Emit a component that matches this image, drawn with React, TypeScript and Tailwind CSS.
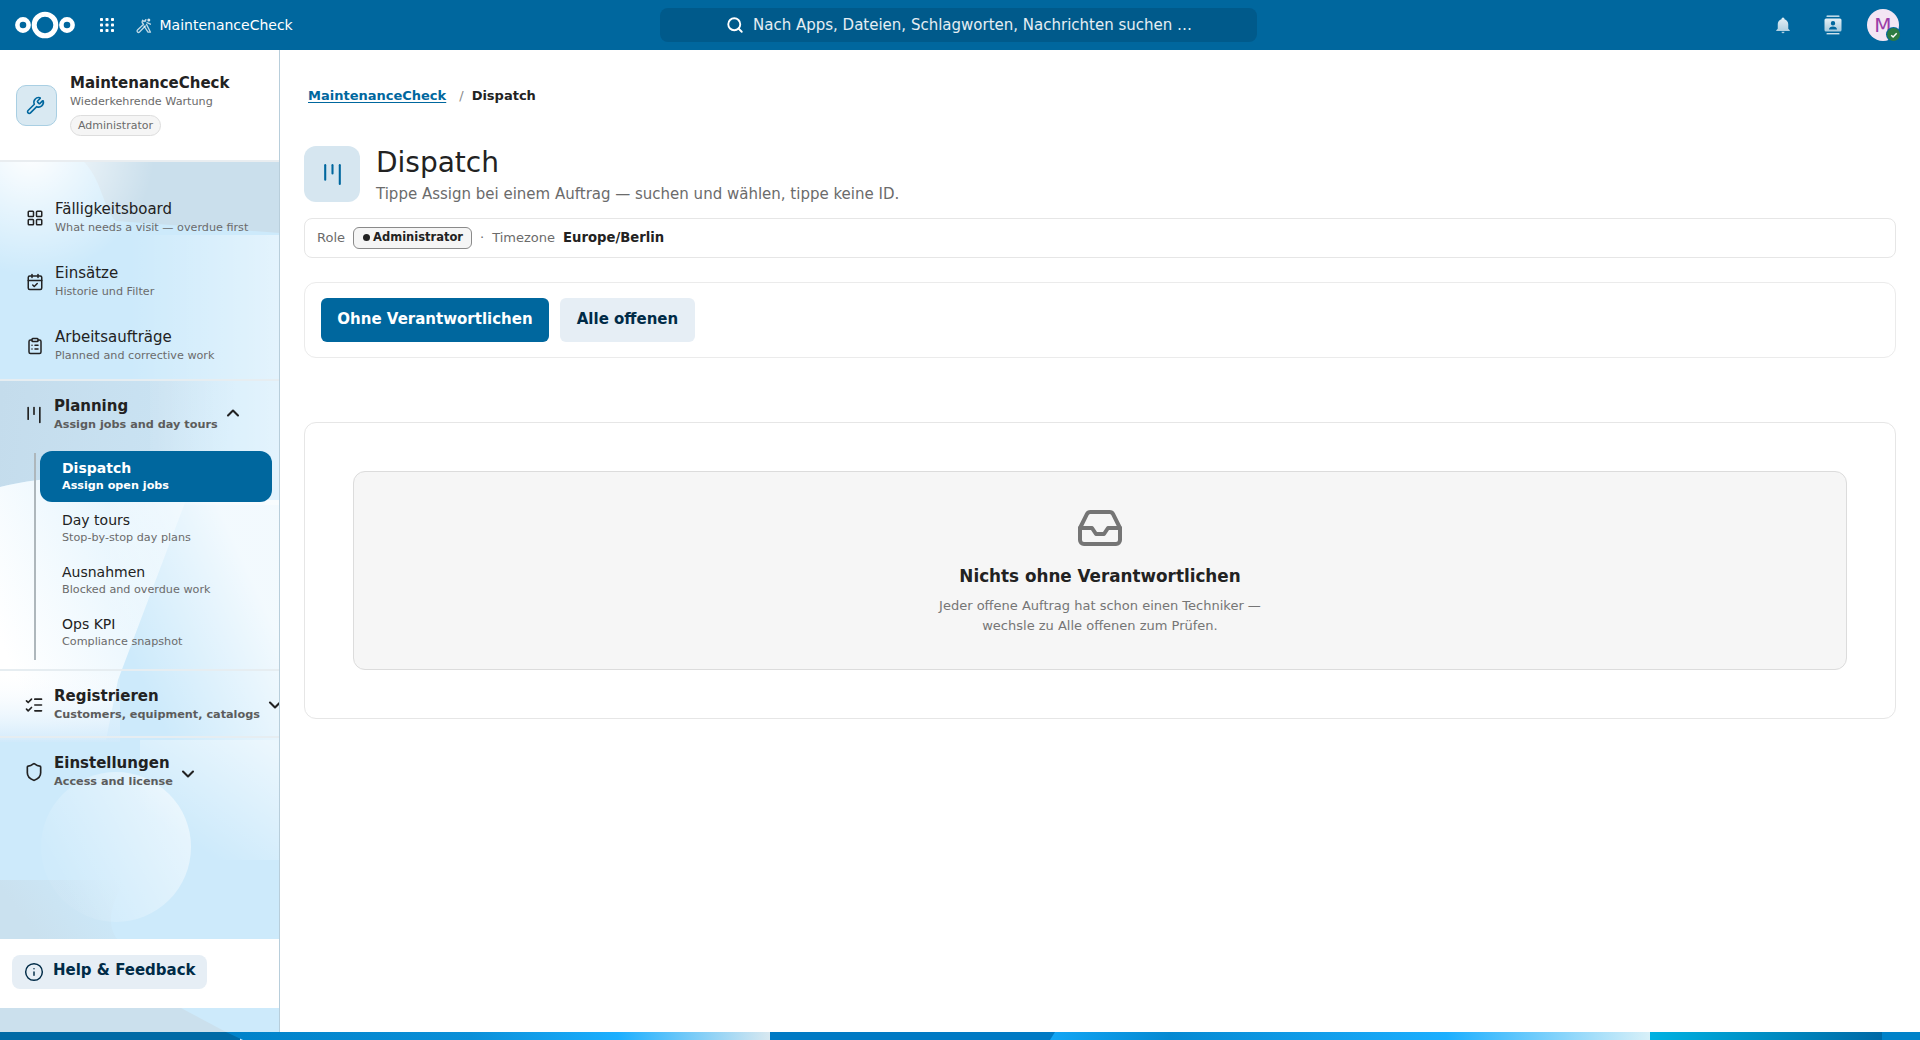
import {
  CalendarCheck,
  ChevronDown,
  ChevronUp,
  ClipboardList,
  Inbox,
  Info,
  Kanban,
  LayoutGrid,
  ListChecks,
  Search,
  Shield,
  Wrench,
} from "lucide-react"

const topItems = [
  { title: "Fälligkeitsboard", sub: "What needs a visit — overdue first", Icon: LayoutGrid },
  { title: "Einsätze", sub: "Historie und Filter", Icon: CalendarCheck },
  { title: "Arbeitsaufträge", sub: "Planned and corrective work", Icon: ClipboardList },
]

const planningItems = [
  { title: "Day tours", sub: "Stop-by-stop day plans" },
  { title: "Ausnahmen", sub: "Blocked and overdue work" },
  { title: "Ops KPI", sub: "Compliance snapshot" },
]

// Nextcloud wallpaper, only visible behind the sidebar and in the strip at the bottom
function Wallpaper() {
  return (
    <svg className="absolute inset-0" width="1920" height="1040" viewBox="0 0 1920 1040">
      <defs>
        <radialGradient id="glowTop" gradientUnits="userSpaceOnUse" cx="30" cy="150" r="125">
          <stop offset="0" stopColor="#ffffff" />
          <stop offset="1" stopColor="#ffffff" stopOpacity="0" />
        </radialGradient>
        <linearGradient id="rightFade" gradientUnits="userSpaceOnUse" x1="130" y1="0" x2="280" y2="0">
          <stop offset="0" stopColor="#ffffff" stopOpacity="0" />
          <stop offset="1" stopColor="#ffffff" stopOpacity="0.45" />
        </linearGradient>
        <linearGradient id="planDark" gradientUnits="userSpaceOnUse" x1="0" y1="400" x2="230" y2="430">
          <stop offset="0" stopColor="#c4dcec" />
          <stop offset="0.7" stopColor="#c9e2f2" />
          <stop offset="1" stopColor="#c9e2f2" stopOpacity="0" />
        </linearGradient>
        <linearGradient id="whiteWedge" gradientUnits="userSpaceOnUse" x1="0" y1="640" x2="190" y2="560">
          <stop offset="0" stopColor="#ffffff" />
          <stop offset="1" stopColor="#dff2fd" />
        </linearGradient>
        <linearGradient id="lowFade" gradientUnits="userSpaceOnUse" x1="0" y1="670" x2="0" y2="745">
          <stop offset="0" stopColor="#ffffff" stopOpacity="0" />
          <stop offset="1" stopColor="#cfe9fb" />
        </linearGradient>
        <linearGradient id="rightWhite" gradientUnits="userSpaceOnUse" x1="150" y1="700" x2="280" y2="640">
          <stop offset="0" stopColor="#ffffff" stopOpacity="0" />
          <stop offset="1" stopColor="#ffffff" stopOpacity="0.75" />
        </linearGradient>
        <linearGradient id="lowRight" gradientUnits="userSpaceOnUse" x1="200" y1="850" x2="270" y2="745">
          <stop offset="0" stopColor="#ffffff" stopOpacity="0" />
          <stop offset="1" stopColor="#ffffff" stopOpacity="0.6" />
        </linearGradient>
        <linearGradient id="bottomDark" gradientUnits="userSpaceOnUse" x1="120" y1="880" x2="40" y2="940">
          <stop offset="0" stopColor="#cae1ef" stopOpacity="0" />
          <stop offset="1" stopColor="#cae1ef" />
        </linearGradient>
        <linearGradient id="disc" gradientUnits="userSpaceOnUse" x1="60" y1="880" x2="190" y2="810">
          <stop offset="0" stopColor="#ffffff" stopOpacity="0.05" />
          <stop offset="1" stopColor="#ffffff" stopOpacity="0.55" />
        </linearGradient>
        <linearGradient id="strip1" gradientUnits="userSpaceOnUse" x1="226" y1="0" x2="770" y2="0">
          <stop offset="0" stopColor="#0082c9" />
          <stop offset="0.45" stopColor="#0a8fd8" />
          <stop offset="0.72" stopColor="#1cafff" />
          <stop offset="1" stopColor="#d8e8f0" />
        </linearGradient>
        <linearGradient id="strip2" gradientUnits="userSpaceOnUse" x1="1050" y1="0" x2="1650" y2="0">
          <stop offset="0" stopColor="#12a6f5" />
          <stop offset="0.2" stopColor="#0589d2" />
          <stop offset="0.66" stopColor="#1cafff" />
          <stop offset="1" stopColor="#d8f0f8" />
        </linearGradient>
        <linearGradient id="strip3" gradientUnits="userSpaceOnUse" x1="1650" y1="0" x2="1885" y2="0">
          <stop offset="0" stopColor="#00b2e2" />
          <stop offset="1" stopColor="#0068a5" />
        </linearGradient>
      </defs>

      <rect x="0" y="50" width="280" height="990" fill="#cdeafb" />
      <path d="M82 160 C102 178 104 212 116 221 L280 233 L280 160 Z" fill="#cadfec" />
      <rect x="0" y="150" width="160" height="130" fill="url(#glowTop)" />
      <rect x="130" y="235" width="150" height="145" fill="url(#rightFade)" />
      <path d="M0 380 L280 380 L280 502 L185 502 C120 470 50 475 0 487 Z" fill="url(#planDark)" />
      <rect x="150" y="380" width="130" height="125" fill="url(#rightFade)" />
      <path d="M0 487 C50 475 120 470 186 500 L118 680 L106 740 L0 740 Z" fill="url(#whiteWedge)" />
      <rect x="0" y="670" width="120" height="72" fill="url(#lowFade)" />
      <rect x="110" y="500" width="170" height="240" fill="url(#rightWhite)" />
      <rect x="140" y="740" width="140" height="120" fill="url(#lowRight)" />
      <path d="M0 880 L125 880 C110 905 106 925 118 940 L0 940 Z" fill="url(#bottomDark)" />
      <circle cx="116" cy="847" r="75" fill="url(#disc)" />
      <path d="M0 1008 L181 1008 L226 1032 L0 1032 Z" fill="#cbe0ed" />

      <rect x="0" y="1032" width="240" height="8" fill="#006aa6" />
      <path d="M226 1032 L770 1032 L770 1040 L243 1040 Z" fill="url(#strip1)" />
      <rect x="770" y="1032" width="285" height="8" fill="#007ac4" />
      <path d="M1055 1032 L1650 1032 L1650 1040 L1050 1040 Z" fill="url(#strip2)" />
      <rect x="1650" y="1032" width="235" height="8" fill="url(#strip3)" />
      <rect x="1882" y="1032" width="38" height="8" fill="#0082c9" />
    </svg>
  )
}

function Logo() {
  return (
    <svg width="62" height="28" viewBox="0 0 62 28" fill="none" stroke="#ffffff">
      <circle cx="31" cy="14" r="10.8" strokeWidth="5" />
      <circle cx="9" cy="14" r="5.6" strokeWidth="4.6" />
      <circle cx="53" cy="14" r="5.6" strokeWidth="4.6" />
    </svg>
  )
}

function AppsIcon() {
  const dots = [0, 5.5, 11]
  return (
    <svg width="14" height="14" viewBox="0 0 14 14" fill="#ffffff">
      {dots.map((y) => dots.map((x) => <rect key={`${x}-${y}`} x={x} y={y} width="3" height="3" rx="0.8" />))}
    </svg>
  )
}

function BellIcon() {
  return (
    <svg width="18" height="18" viewBox="0 0 24 24">
      <defs>
        <linearGradient id="iconFade" x1="0" y1="0" x2="0" y2="1">
          <stop offset="0" stopColor="#ffffff" stopOpacity="0.9" />
          <stop offset="1" stopColor="#ffffff" stopOpacity="0.65" />
        </linearGradient>
      </defs>
      <path
        d="M21 19v1H3v-1l2-2v-6c0-3.1 2-5.8 5-6.7V4a2 2 0 0 1 4 0v.3c3 .9 5 3.6 5 6.7v6l2 2zm-7 2a2 2 0 0 1-4 0h4z"
        fill="url(#iconFade)"
      />
    </svg>
  )
}

function ContactsIcon() {
  return (
    <svg width="18" height="20" viewBox="0 0 18 20" fill="url(#iconFade)">
      <rect x="2.5" y="0.5" width="13" height="1.6" rx="0.6" />
      <rect x="2.5" y="17.9" width="13" height="1.6" rx="0.6" />
      <path
        fillRule="evenodd"
        d="M2 3.5h14a1.5 1.5 0 0 1 1.5 1.5v10a1.5 1.5 0 0 1-1.5 1.5H2A1.5 1.5 0 0 1 .5 15V5A1.5 1.5 0 0 1 2 3.5zM9 6a2.2 2.2 0 1 0 0 4.4A2.2 2.2 0 0 0 9 6zm-4 8.5h8c0-2-1.8-3-4-3s-4 1-4 3z"
      />
    </svg>
  )
}

function HeaderToolIcon() {
  return (
    <svg width="16" height="17" viewBox="0 0 16 17" fill="none" stroke="#ffffff" strokeOpacity="0.75" strokeWidth="1.3" strokeLinecap="round" strokeLinejoin="round">
      <path d="M9.5 4.2a3.2 3.2 0 0 1 .4-1.6L8 4.5 6.6 3.2a3 3 0 0 0 1 4L1.5 13a1.4 1.4 0 0 0 2 2l5.8-6" />
      <path d="M8 9l4 6.2h2.5L10.5 7.4" />
      <circle cx="12.8" cy="3" r="1.5" fill="#ffffff" fillOpacity="0.85" stroke="none" />
      <path d="M11 5.6l3.4 1.6" />
    </svg>
  )
}

function Header() {
  return (
    <header className="relative flex h-[50px] items-center bg-[#00679e] text-white">
      <div className="ml-[14px]">
        <Logo />
      </div>
      <div className="ml-[24px]">
        <AppsIcon />
      </div>
      <div className="ml-[22px]">
        <HeaderToolIcon />
      </div>
      <span className="ml-[7.5px] text-[14px]">MaintenanceCheck</span>
      <div className="absolute left-[660px] top-[8px] flex h-[34px] w-[597px] items-center rounded-lg bg-[#005a8b] pl-[66px]">
        <Search size={18} strokeWidth={2.5} className="text-white" />
        <span className="ml-[9px] text-[15px] text-white/90">Nach Apps, Dateien, Schlagworten, Nachrichten suchen …</span>
      </div>
      <div className="ml-auto flex items-center">
        <BellIcon />
        <div className="ml-[32px] flex">
          <ContactsIcon />
        </div>
        <div className="relative ml-[25px] mr-[21px] flex h-8 w-8 items-center justify-center rounded-full bg-[#f3e6f4] text-[20px] text-[#9b3ea8]">
          M
          <span className="absolute left-[20px] top-[19px] flex h-[13px] w-[13px] items-center justify-center rounded-full bg-[#2d7b41] ring-1 ring-[#00679e]">
            <svg width="8" height="8" viewBox="0 0 8 8" fill="none" stroke="#ffffff" strokeWidth="1.5">
              <path d="M1.2 4.2l1.9 1.8 3.6-3.8" />
            </svg>
          </span>
        </div>
      </div>
    </header>
  )
}

function Sidebar() {
  return (
    <aside className="mb-2 flex w-[280px] shrink-0 flex-col overflow-hidden border-r border-[#b8cedb] pb-6">
      <div className="flex h-[112px] shrink-0 items-start gap-[13px] border-b-2 border-[#e9edf0] bg-white pl-4 pt-[21px]">
        <div className="mt-[14px] flex h-[41px] w-[41px] items-center justify-center rounded-[10px] border border-[#a9cfe3] bg-[#d9e9f2] text-[#00679e]">
          <Wrench size={19} strokeWidth={2} className="-translate-x-px" />
        </div>
        <div>
          <div className="text-[15px] font-bold leading-6 text-[#222222]">MaintenanceCheck</div>
          <div className="text-[11.2px] leading-[14px] text-[#6b6b6b]">Wiederkehrende Wartung</div>
          <div className="mt-[6px] inline-block rounded-full border border-[#dddddd] bg-[#f5f5f5] px-[7px] text-[11px] leading-[19px] text-[#6b6b6b]">
            Administrator
          </div>
        </div>
      </div>

      <nav className="flex-1 pt-6 text-[#222222]">
        {topItems.map(({ title, sub, Icon }) => (
          <div key={title} className="flex h-16 items-center pl-[26px]">
            <Icon size={18} strokeWidth={2} />
            <div className="ml-[11px]">
              <div className="text-[15px] leading-5">{title}</div>
              <div className="text-[11.2px] leading-[18px] text-[#6b6b6b]">{sub}</div>
            </div>
          </div>
        ))}

        <div className="mt-px flex h-[69px] items-center border-t-2 border-[#e6edf1] pl-[24px]">
          <Kanban size={20} strokeWidth={2} />
          <div className="ml-[10px]">
            <div className="text-[15px] font-bold leading-5">Planning</div>
            <div className="text-[11.25px] font-bold leading-[18px] text-[#5c5c5c]">Assign jobs and day tours</div>
          </div>
          <ChevronUp size={20} strokeWidth={2.5} className="ml-[5px] -translate-y-[2px]" />
        </div>

        <div className="ml-[34px] mt-[5px] w-[238px] border-l-2 border-[#aeb7bc]">
          <div className="-mb-[1.5px] ml-[4px] flex h-[51px] -translate-y-[2px] flex-col justify-center rounded-xl bg-[#00679e] pl-[22px] text-white">
            <div className="text-[14px] font-bold leading-[17px]">Dispatch</div>
            <div className="text-[11.2px] font-bold leading-[17px]">Assign open jobs</div>
          </div>
          {planningItems.map((item) => (
            <div key={item.title} className="ml-[4px] flex h-[52.4px] flex-col justify-center pl-[22px]">
              <div className="text-[14px] leading-[17px]">{item.title}</div>
              <div className="text-[11.2px] leading-[17px] text-[#6b6b6b]">{item.sub}</div>
            </div>
          ))}
        </div>

        <div className="mt-[9.5px] flex h-[69px] items-center border-y-2 border-[#e6edf1] pl-[24px] pt-[2px]">
          <ListChecks size={20} strokeWidth={2} className="shrink-0" />
          <div className="ml-[10px] shrink-0">
            <div className="text-[15px] font-bold leading-5">Registrieren</div>
            <div className="whitespace-nowrap text-[11.25px] font-bold leading-[18px] text-[#5c5c5c]">Customers, equipment, catalogs</div>
          </div>
          <ChevronDown size={20} strokeWidth={2.5} className="ml-[5px] shrink-0" />
        </div>

        <div className="flex h-[67px] items-center pl-[24px]">
          <Shield size={20} strokeWidth={2} />
          <div className="ml-[10px]">
            <div className="text-[15px] font-bold leading-5">Einstellungen</div>
            <div className="text-[11.25px] font-bold leading-[18px] text-[#5c5c5c]">Access and license</div>
          </div>
          <ChevronDown size={20} strokeWidth={2.5} className="ml-[5.5px] translate-y-[2px]" />
        </div>
      </nav>

      <div className="flex h-[69px] shrink-0 items-start bg-white pl-3 pt-4">
        <div className="flex h-[34px] w-[195px] items-center gap-[9px] rounded-lg bg-[#e6eef5] pl-[12px] text-[15px] font-bold text-[#002b47]">
          <Info size={20} strokeWidth={1.75} />
          <span className="-translate-y-[2px]">Help &amp; Feedback</span>
        </div>
      </div>
    </aside>
  )
}

function Main() {
  return (
    <main className="mb-2 flex-1 bg-white pl-6 pr-6">
      <div className="flex h-[56px] items-end pl-[4px] text-[13px] font-bold leading-5">
        <span className="text-[#00679e] underline underline-offset-2">MaintenanceCheck</span>
        <span className="ml-[13px] font-normal text-[#8a8a8a]">/</span>
        <span className="ml-[8px] text-[#222222]">Dispatch</span>
      </div>

      <div className="mt-[40px] flex">
        <div className="flex h-14 w-14 items-center justify-center rounded-xl bg-[#d6e6f0] text-[#00679e]">
          <Kanban size={25} strokeWidth={2} />
        </div>
        <div className="ml-4">
          <h1 className="text-[28px] font-normal leading-[34px] text-[#222222]">Dispatch</h1>
          <p className="mt-[4px] text-[15px] leading-5 text-[#6b6b6b]">Tippe Assign bei einem Auftrag — suchen und wählen, tippe keine ID.</p>
        </div>
      </div>

      <div className="mt-[14px] flex h-10 items-center rounded-lg border border-[#e6e6e6] pl-3 text-[13px] text-[#6b6b6b]">
        <span>Role</span>
        <span className="ml-[8px] flex h-[22px] items-center rounded-md border border-[#8a8a8a] bg-[#f5f5f5] pl-[9px] pr-[8px] text-[11.5px] font-bold text-[#222222]">
          <span className="mr-[3px] h-[7px] w-[7px] -translate-y-px rounded-full bg-[#222222]" />
          Administrator
        </span>
        <span className="ml-[8px]">·</span>
        <span className="ml-[8px]">Timezone</span>
        <span className="ml-[8px] text-[13.2px] font-bold text-[#222222]">Europe/Berlin</span>
      </div>

      <div className="mt-6 flex h-[76px] items-center gap-[11px] rounded-xl border border-[#ebebeb] pl-4">
        <button className="h-11 w-[228px] rounded-md bg-[#00679e] pb-[2px] text-[15px] font-bold text-white">Ohne Verantwortlichen</button>
        <button className="h-11 w-[135px] rounded-md bg-[#e6eef5] pb-[2px] text-[15px] font-bold text-[#002b47]">Alle offenen</button>
      </div>

      <div className="mt-[64px] rounded-xl border border-[#e6e6e6] px-[48px] py-[48px]">
        <div className="flex h-[199px] flex-col items-center rounded-xl border border-[#dcdcdc] bg-[#f6f6f6] pt-[32px]">
          <Inbox size={48} strokeWidth={2} className="text-[#757575]" />
          <div className="mt-[12px] text-[16.8px] font-bold leading-6 text-[#222222]">Nichts ohne Verantwortlichen</div>
          <p className="mt-[8px] text-center text-[13px] leading-5 text-[#757575]">
            Jeder offene Auftrag hat schon einen Techniker —
            <br />
            wechsle zu Alle offenen zum Prüfen.
          </p>
        </div>
      </div>
    </main>
  )
}

export default function App() {
  return (
    <div className="relative flex h-[1040px] w-[1920px] flex-col overflow-hidden font-['DejaVu_Sans',sans-serif]">
      <Wallpaper />
      <Header />
      <div className="relative flex flex-1">
        <Sidebar />
        <Main />
      </div>
    </div>
  )
}
